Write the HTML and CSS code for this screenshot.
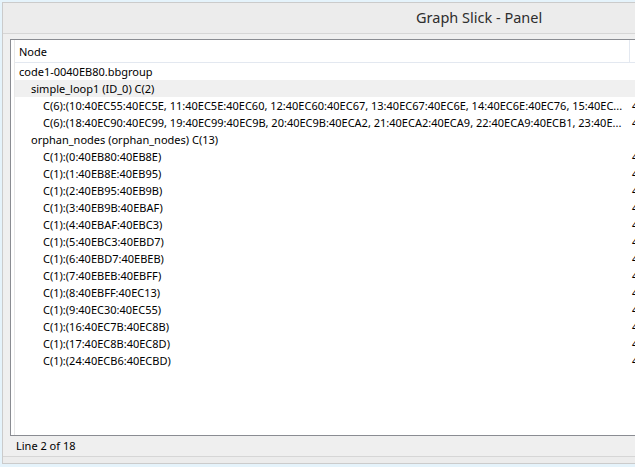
FILE: index.html
```html
<!DOCTYPE html>
<html>
<head>
<meta charset="utf-8">
<title>Graph Slick - Panel</title>
<link rel="stylesheet" href="styles.css">
</head>
<body>
<div class="window">
  <div class="titlebar"><span class="title">Graph Slick - Panel</span></div>
  <div class="client">
    <div class="list">
      <div class="inner">
        <div class="header"><div class="hcell">Node</div><div class="hcell2"></div></div>
        <div class="row"><div class="cell l0">code1-0040EB80.bbgroup</div></div>
        <div class="row sel"><div class="cell l1">simple_loop1 (ID_0) C(2)</div></div>
        <div class="row"><div class="cell l2">C(6):(10:40EC55:40EC5E, 11:40EC5E:40EC60, 12:40EC60:40EC67, 13:40EC67:40EC6E, 14:40EC6E:40EC76, 15:40EC...</div><div class="cell2">40EC55</div></div>
        <div class="row"><div class="cell l2">C(6):(18:40EC90:40EC99, 19:40EC99:40EC9B, 20:40EC9B:40ECA2, 21:40ECA2:40ECA9, 22:40ECA9:40ECB1, 23:40E...</div><div class="cell2">40EC90</div></div>
        <div class="row"><div class="cell l1">orphan_nodes (orphan_nodes) C(13)</div></div>
        <div class="row"><div class="cell l2">C(1):(0:40EB80:40EB8E)</div><div class="cell2">40EB80</div></div>
        <div class="row"><div class="cell l2">C(1):(1:40EB8E:40EB95)</div><div class="cell2">40EB8E</div></div>
        <div class="row"><div class="cell l2">C(1):(2:40EB95:40EB9B)</div><div class="cell2">40EB95</div></div>
        <div class="row"><div class="cell l2">C(1):(3:40EB9B:40EBAF)</div><div class="cell2">40EB9B</div></div>
        <div class="row"><div class="cell l2">C(1):(4:40EBAF:40EBC3)</div><div class="cell2">40EBAF</div></div>
        <div class="row"><div class="cell l2">C(1):(5:40EBC3:40EBD7)</div><div class="cell2">40EBC3</div></div>
        <div class="row"><div class="cell l2">C(1):(6:40EBD7:40EBEB)</div><div class="cell2">40EBD7</div></div>
        <div class="row"><div class="cell l2">C(1):(7:40EBEB:40EBFF)</div><div class="cell2">40EBEB</div></div>
        <div class="row"><div class="cell l2">C(1):(8:40EBFF:40EC13)</div><div class="cell2">40EBFF</div></div>
        <div class="row"><div class="cell l2">C(1):(9:40EC30:40EC55)</div><div class="cell2">40EC30</div></div>
        <div class="row"><div class="cell l2">C(1):(16:40EC7B:40EC8B)</div><div class="cell2">40EC7B</div></div>
        <div class="row"><div class="cell l2">C(1):(17:40EC8B:40EC8D)</div><div class="cell2">40EC8B</div></div>
        <div class="row"><div class="cell l2">C(1):(24:40ECB6:40ECBD)</div><div class="cell2">40ECB6</div></div>
      </div>
    </div>
    <div class="status">Line 2 of 18</div>
  </div>
</div>
</body>
</html>
```

FILE: styles.css
```css
html, body {
  margin: 0;
  padding: 0;
  width: 635px;
  height: 467px;
  overflow: hidden;
  background: #e5f3fb;
  font-family: "Noto Sans", "Open Sans", sans-serif;
  color: #000;
}

.window {
  margin: 2px 0 0 2px;
  width: 720px;
  height: 460px;
  border: 1px solid #cbcbcb;
  background: #ececec;
  display: flex;
  flex-direction: column;
}

.titlebar {
  height: 30px;
  flex: none;
  border-bottom: 1px solid #d6d6d6;
  display: flex;
  align-items: center;
  padding-left: 413px;
}

.title {
  font-size: 14.5px;
  color: #2e2e2e;
  position: relative;
  top: -1px;
}

.client {
  flex: 1;
  display: flex;
  flex-direction: column;
  padding: 5px 0 0 7px;
  background: #efefef;
  border-bottom: 6px solid #ececec;
  box-shadow: inset 0 -1px 0 #d6d6d6;
}

.list {
  height: 395px;
  flex: none;
  border: 1px solid #8a8c92;
  border-right: none;
  background: #fff;
  overflow: hidden;
}

.inner {
  margin-left: 3px;
  border-left: 1px solid #e8e8e8;
  height: 100%;
}

.header {
  height: 22px;
  display: flex;
  border-bottom: 1px solid #e3e8f0;
  background: #fff;
}

.hcell {
  width: 610px;
  flex: none;
  border-right: 1px solid #e3e8f0;
  font-size: 11px;
  line-height: 23px;
  padding-left: 4px;
}

.row {
  height: 17px;
  display: flex;
  font-size: 11px;
  line-height: 18px;
  white-space: nowrap;
}

.row.sel {
  background: #f0f0f0;
}

.cell {
  width: 614px;
  flex: none;
  overflow: hidden;
  box-sizing: border-box;
}

.cell2 {
  padding-left: 3px;
}

.l0 { padding-left: 4px; }
.l1 { padding-left: 16px; }
.l2 { padding-left: 28px; }

.status {
  flex: 1;
  font-size: 11px;
  line-height: 20px;
  padding-left: 6px;
}
```
